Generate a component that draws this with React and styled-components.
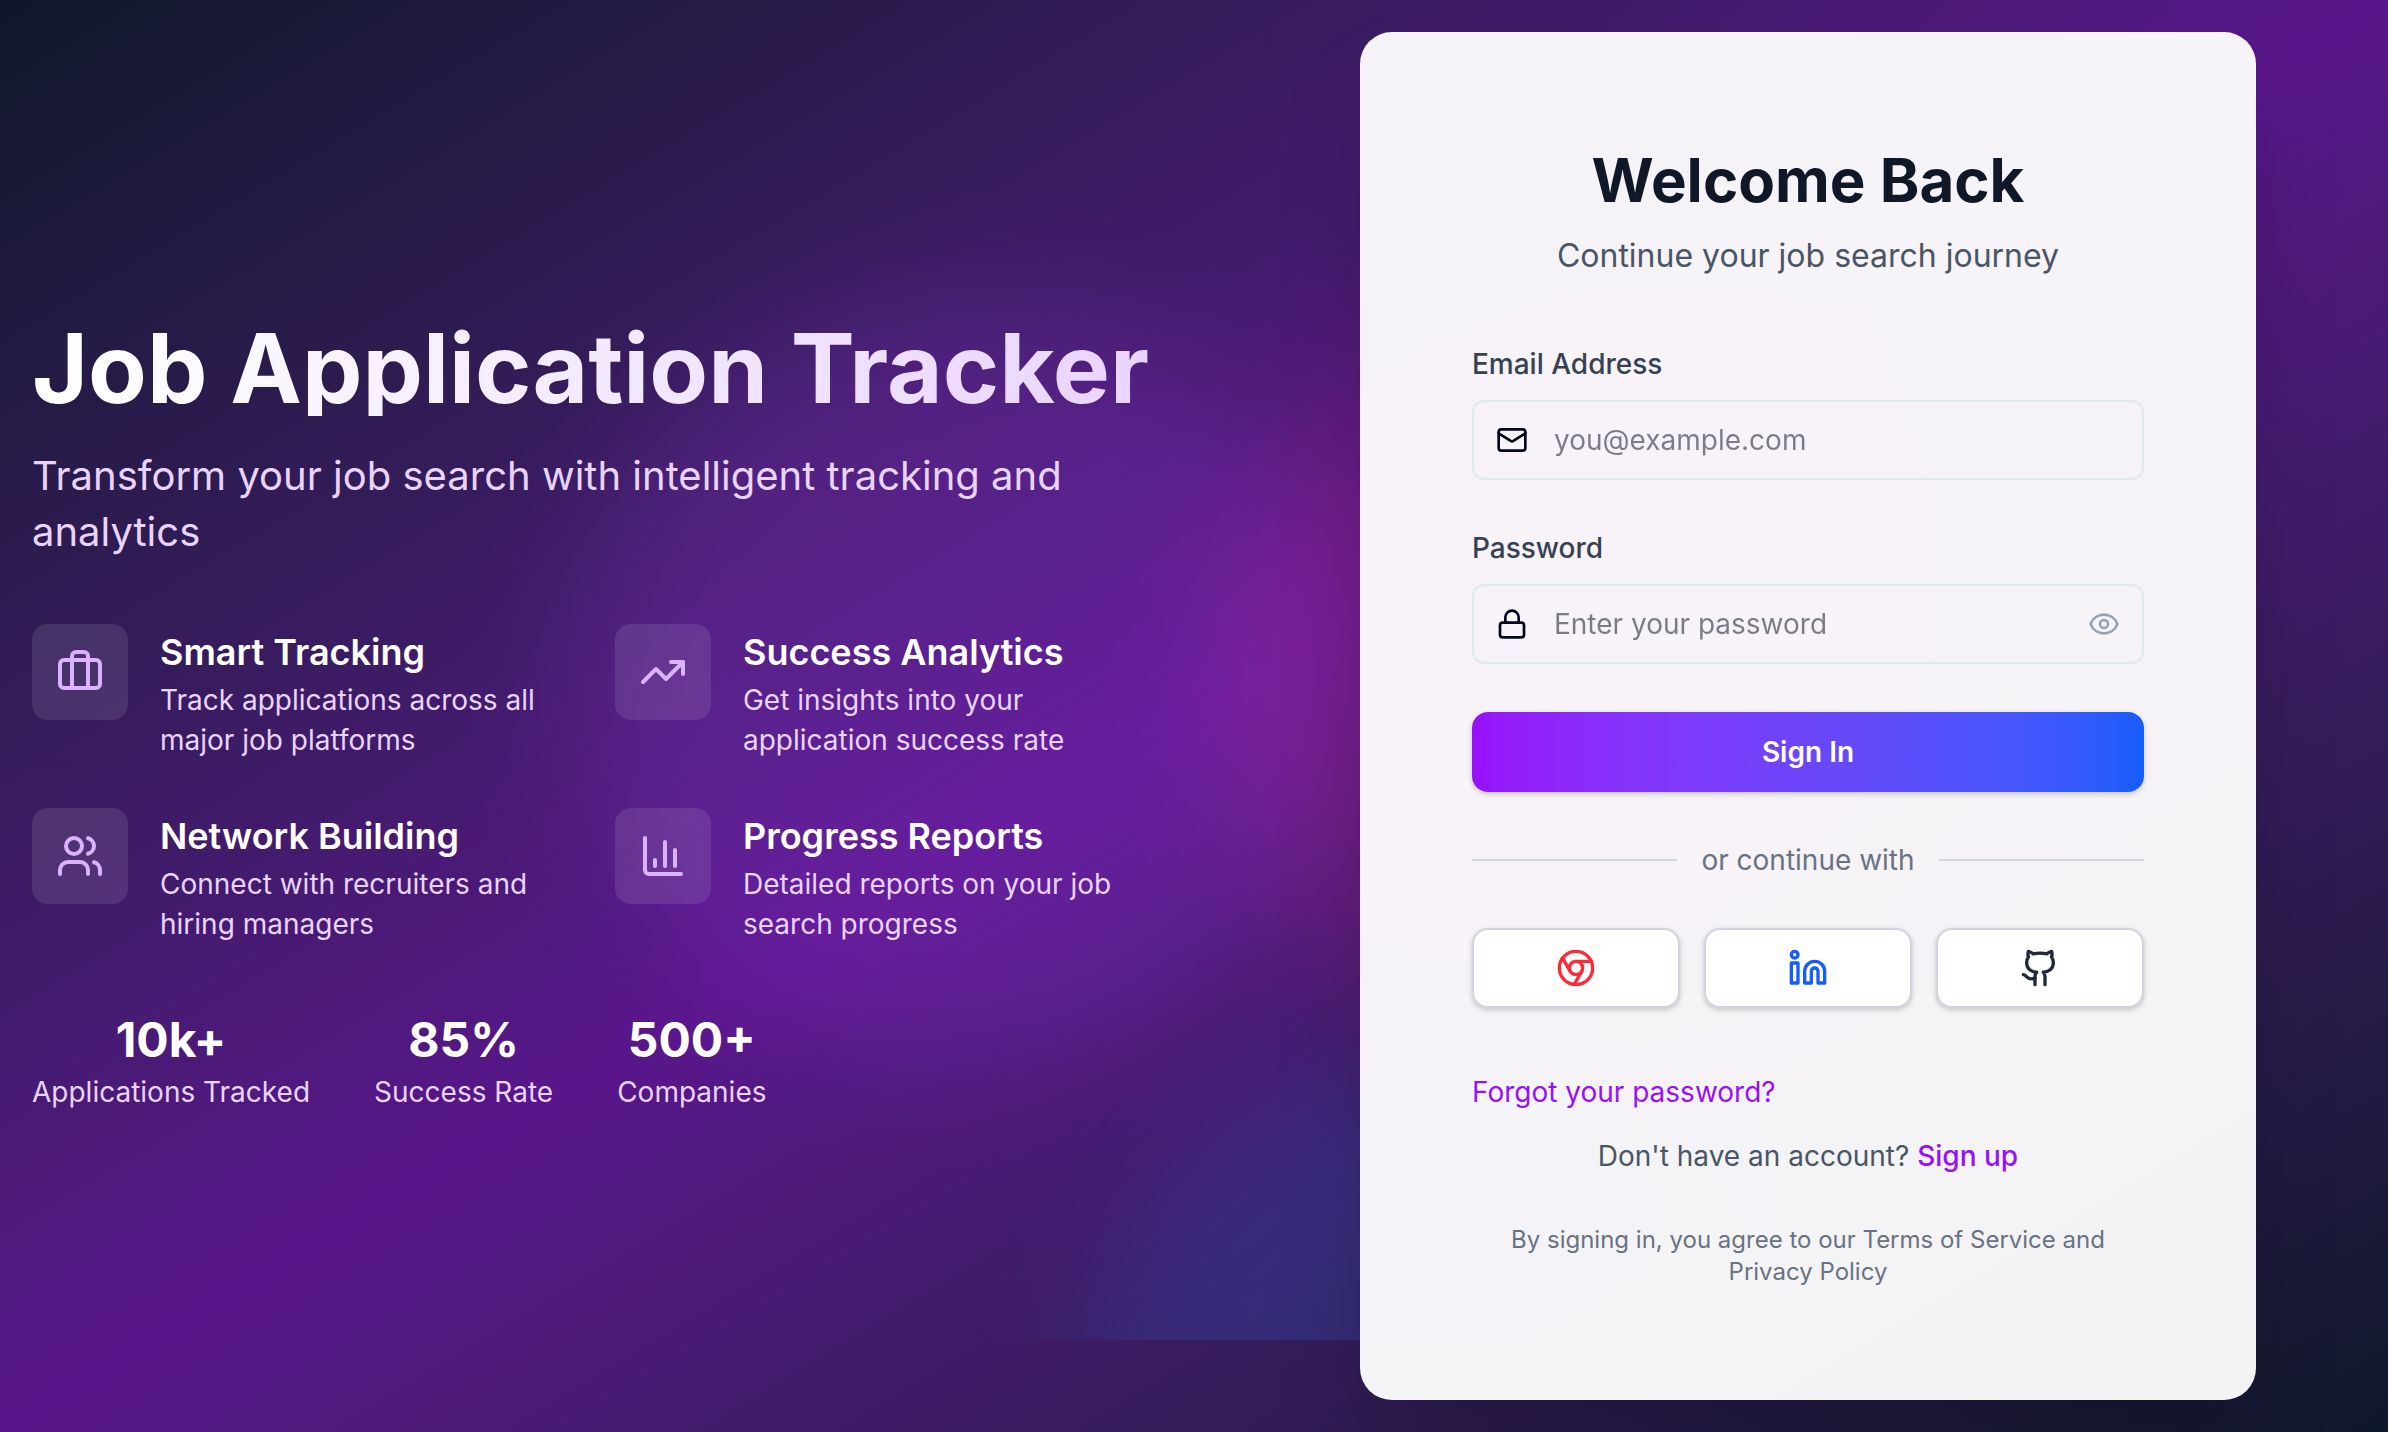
import React, { useState } from "react";
import styled, { createGlobalStyle } from "styled-components";
import {
  Briefcase,
  TrendingUp,
  Users,
  ChartColumn,
  Mail,
  Lock,
  Eye,
  Chrome,
  Linkedin,
  Github,
} from "lucide-react";

const GlobalStyle = createGlobalStyle`
  *, *::before, *::after { box-sizing: border-box; }
  body { margin: 0; background: #0f172b; }
  body, button, input { font-family: Inter, "Liberation Sans", sans-serif; }
  h1, h2, h3, p, dl, dt, dd, ul { margin: 0; padding: 0; }
`;

const Page = styled.div`
  position: relative;
  min-height: 100vh;
  display: grid;
  background: linear-gradient(to bottom right in oklab, #0f172b, #59168b 50%, #0f172b);
`;

const Backdrop = styled.div`
  position: absolute;
  inset: 0 0 92px;
  overflow: hidden;
  pointer-events: none;
`;

const Blob = styled.div`
  position: absolute;
  top: ${(p) => p.$top};
  left: ${(p) => p.$left};
  width: 768px;
  height: 768px;
  border-radius: 50%;
  background: ${(p) => p.$color};
  opacity: 0.16;
  filter: blur(64px);
`;

const Columns = styled.main`
  position: relative;
  display: grid;
  grid-template-columns: minmax(0, 1.02fr) minmax(0, 1fr);
  gap: 110px;
  align-items: center;
  padding: 32px;
`;

const Intro = styled.section`
  display: flex;
  flex-direction: column;
  gap: 64px;
`;

const Heading = styled.header`
  display: flex;
  flex-direction: column;
  gap: 32px;
`;

const Title = styled.h1`
  font-size: 96px;
  line-height: 96px;
  font-weight: 700;
  color: transparent;
  background: linear-gradient(to right in oklab, #ffffff, #e9d4ff);
  background-clip: text;
`;

const Lead = styled.p`
  font-size: 40px;
  line-height: 56px;
  color: #e9d4ff;
`;

const Features = styled.ul`
  list-style: none;
  display: grid;
  grid-template-columns: repeat(2, minmax(0, 1fr));
  gap: 48px;
`;

const Feature = styled.li`
  display: flex;
  align-items: flex-start;
  gap: 32px;
`;

const FeatureIcon = styled.div`
  flex: none;
  display: grid;
  place-items: center;
  width: 96px;
  height: 96px;
  border-radius: 16px;
  background: rgba(255, 255, 255, 0.1);
  color: #dab2ff;
`;

const FeatureTitle = styled.h3`
  font-size: 36px;
  line-height: 56px;
  font-weight: 600;
  color: #ffffff;
`;

const FeatureText = styled.p`
  font-size: 28px;
  line-height: 40px;
  color: #e9d4ff;
`;

const Stats = styled.dl`
  display: flex;
  gap: 64px;
`;

const Stat = styled.div`
  display: flex;
  flex-direction: column-reverse;
  text-align: center;
`;

const StatValue = styled.dd`
  font-size: 48px;
  line-height: 64px;
  font-weight: 700;
  color: #ffffff;
`;

const StatLabel = styled.dt`
  font-size: 28px;
  line-height: 40px;
  color: #e9d4ff;
`;

const Card = styled.section`
  justify-self: center;
  width: 100%;
  max-width: 896px;
  padding: 112px;
  border-radius: 32px;
  background: rgba(255, 255, 255, 0.95);
  box-shadow: 0 50px 100px -24px rgba(0, 0, 0, 0.25);
`;

const CardHeader = styled.header`
  display: flex;
  flex-direction: column;
  gap: 16px;
  text-align: center;
`;

const CardTitle = styled.h2`
  font-size: 60px;
  line-height: 72px;
  font-weight: 700;
  color: #101828;
`;

const CardLead = styled.p`
  font-size: 32px;
  line-height: 48px;
  color: #4a5565;
`;

const Form = styled.form`
  display: flex;
  flex-direction: column;
  gap: 48px;
  margin-top: 64px;
`;

const Field = styled.div`
  display: flex;
  flex-direction: column;
  gap: 16px;
`;

const Label = styled.label`
  font-size: 28px;
  line-height: 40px;
  font-weight: 500;
  color: #364153;
`;

const InputBox = styled.div`
  display: flex;
  align-items: center;
  gap: 26px;
  height: 80px;
  padding: 0 22px;
  border: 2px solid #e2e8f0;
  border-radius: 12px;
  color: #020618;

  svg {
    flex: none;
  }
`;

const Input = styled.input`
  flex: 1;
  min-width: 0;
  padding: 0;
  border: 0;
  outline: 0;
  background: transparent;
  font-size: 28px;
  line-height: 40px;
  color: #020618;

  &::placeholder {
    color: #020618;
    opacity: 0.5;
  }
`;

const RevealButton = styled.button`
  display: flex;
  padding: 0;
  border: 0;
  background: none;
  color: #99a1af;
  cursor: pointer;
`;

const SubmitButton = styled.button`
  height: 80px;
  border: 0;
  border-radius: 16px;
  background: linear-gradient(to right in oklab, #9810fa, #155dfc);
  box-shadow: 0 2px 4px rgba(0, 0, 0, 0.1), 0 2px 6px rgba(0, 0, 0, 0.1);
  font-size: 28px;
  line-height: 40px;
  font-weight: 600;
  color: #ffffff;
  cursor: pointer;
`;

const Divider = styled.div`
  display: flex;
  align-items: center;
  gap: 24px;
  font-size: 28px;
  line-height: 40px;
  color: #6a7282;

  &::before,
  &::after {
    content: "";
    flex: 1;
    height: 2px;
    background: #d1d5dc;
  }
`;

const Providers = styled.div`
  display: grid;
  grid-template-columns: repeat(3, minmax(0, 1fr));
  gap: 24px;
`;

const ProviderButton = styled.button`
  display: grid;
  place-items: center;
  height: 80px;
  padding: 0;
  border: 2px solid #d1d5dc;
  border-radius: 16px;
  background: #ffffff;
  box-shadow: 0 2px 4px rgba(0, 0, 0, 0.1), 0 2px 6px rgba(0, 0, 0, 0.1);
  color: ${(p) => p.$color};
  cursor: pointer;
`;

const CardFooter = styled.footer`
  display: flex;
  flex-direction: column;
  gap: 24px;
  margin-top: 64px;
  font-size: 28px;
  line-height: 40px;
  color: #4a5565;
`;

const TextLink = styled.a`
  align-self: flex-start;
  font-weight: ${(p) => (p.$strong ? 500 : 400)};
  color: #9810fa;
  text-decoration: none;
`;

const Centered = styled.p`
  text-align: center;
`;

const Legal = styled.p`
  margin-top: 24px;
  font-size: 24px;
  line-height: 32px;
  text-align: center;
  color: #6a7282;
`;

const features = [
  { icon: Briefcase, title: "Smart Tracking", text: "Track applications across all major job platforms" },
  { icon: TrendingUp, title: "Success Analytics", text: "Get insights into your application success rate" },
  { icon: Users, title: "Network Building", text: "Connect with recruiters and hiring managers" },
  { icon: ChartColumn, title: "Progress Reports", text: "Detailed reports on your job search progress" },
];

const stats = [
  { value: "10k+", label: "Applications Tracked" },
  { value: "85%", label: "Success Rate" },
  { value: "500+", label: "Companies" },
];

const providers = [
  { name: "Google", icon: Chrome, color: "#fb2c36" },
  { name: "LinkedIn", icon: Linkedin, color: "#155dfc" },
  { name: "GitHub", icon: Github, color: "#1e2939" },
];

export default function App() {
  const [revealed, setRevealed] = useState(false);

  return (
    <Page>
      <GlobalStyle />
      <Backdrop>
        <Blob $top="22%" $left="24%" $color="#ad46ff" />
        <Blob $top="22%" $left="51%" $color="#f6339a" />
        <Blob $top="79%" $left="45%" $color="#2b7fff" />
      </Backdrop>
      <Columns>
        <Intro>
          <Heading>
            <Title>Job Application Tracker</Title>
            <Lead>Transform your job search with intelligent tracking and analytics</Lead>
          </Heading>
          <Features>
            {features.map(({ icon: Icon, title, text }) => (
              <Feature key={title}>
                <FeatureIcon>
                  <Icon size={48} />
                </FeatureIcon>
                <div>
                  <FeatureTitle>{title}</FeatureTitle>
                  <FeatureText>{text}</FeatureText>
                </div>
              </Feature>
            ))}
          </Features>
          <Stats>
            {stats.map(({ value, label }) => (
              <Stat key={label}>
                <StatLabel>{label}</StatLabel>
                <StatValue>{value}</StatValue>
              </Stat>
            ))}
          </Stats>
        </Intro>
        <Card>
          <CardHeader>
            <CardTitle>Welcome Back</CardTitle>
            <CardLead>Continue your job search journey</CardLead>
          </CardHeader>
          <Form onSubmit={(event) => event.preventDefault()}>
            <Field>
              <Label htmlFor="email">Email Address</Label>
              <InputBox>
                <Mail size={32} />
                <Input id="email" type="email" placeholder="you@example.com" />
              </InputBox>
            </Field>
            <Field>
              <Label htmlFor="password">Password</Label>
              <InputBox>
                <Lock size={32} />
                <Input id="password" type={revealed ? "text" : "password"} placeholder="Enter your password" />
                <RevealButton type="button" aria-label="Show password" onClick={() => setRevealed(!revealed)}>
                  <Eye size={32} />
                </RevealButton>
              </InputBox>
            </Field>
            <SubmitButton type="submit">Sign In</SubmitButton>
            <Divider>or continue with</Divider>
            <Providers>
              {providers.map(({ name, icon: Icon, color }) => (
                <ProviderButton key={name} type="button" aria-label={name} $color={color}>
                  <Icon size={40} />
                </ProviderButton>
              ))}
            </Providers>
          </Form>
          <CardFooter>
            <TextLink href="#forgot">Forgot your password?</TextLink>
            <Centered>
              Don't have an account? <TextLink href="#signup" $strong>Sign up</TextLink>
            </Centered>
            <Legal>By signing in, you agree to our Terms of Service and Privacy Policy</Legal>
          </CardFooter>
        </Card>
      </Columns>
    </Page>
  );
}
